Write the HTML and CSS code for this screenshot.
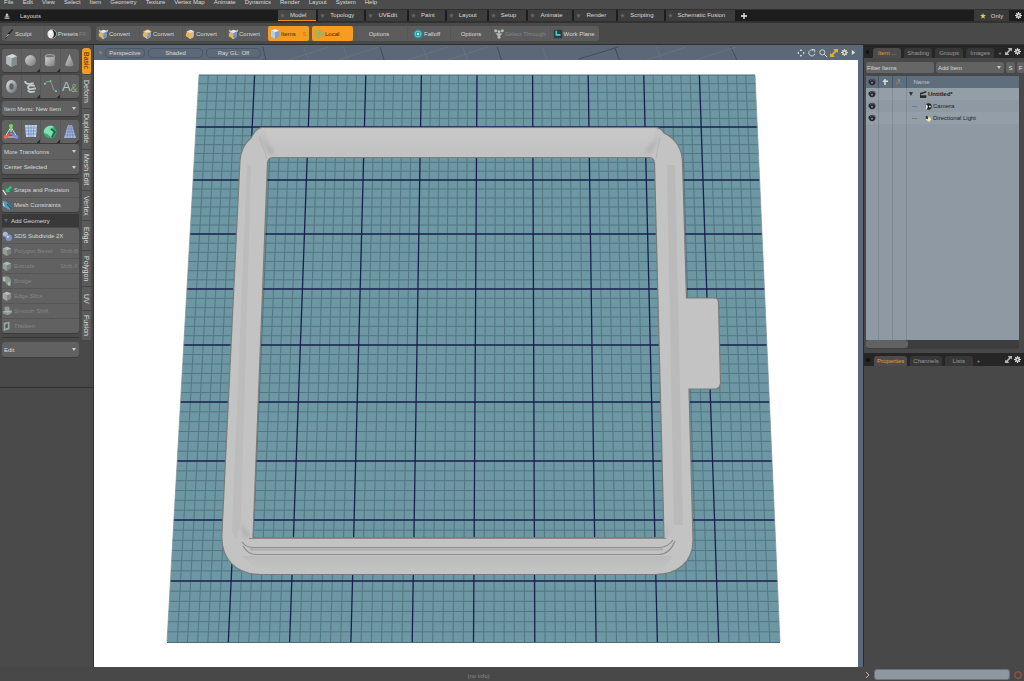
FILE: index.html
```
<!DOCTYPE html>
<html lang="en">
<head>
<meta charset="utf-8">
<title>Modeler</title>
<link rel="stylesheet" href="styles.css">
</head>
<body>
<svg class="defs" width="0" height="0" aria-hidden="true">
  <defs>
    <linearGradient id="metal" x1="0" y1="0" x2="1" y2="1"><stop offset="0" stop-color="#d2d5d7"/><stop offset="1" stop-color="#777b7e"/></linearGradient>
    <symbol id="gear" viewBox="0 0 12 12"><g stroke="#d6d6d6" stroke-width="2"><path d="M6 0v12M0 6h12M2 2l8 8M10 2l-8 8"/></g><circle cx="6" cy="6" r="4" fill="#d6d6d6"/><circle cx="6" cy="6" r="1.500" fill="#444"/></symbol>
    <symbol id="expand" viewBox="0 0 12 12"><path d="M6 0h6v6l-2-2-5 5 2 2-1 1H0V6l2 2 5-5-2-2z" fill="currentColor"/></symbol>
    <symbol id="convert" viewBox="0 0 12 12"><path d="M2 3l5-2 4 2-1 7-4 2-4-3z" fill="#a9c2dc"/><path d="M2 3l5-2 4 2-5 2z" fill="#dbe7f2"/><path d="M6 5l5-2-1 7-4 2z" fill="#6f93bd"/><path d="M1 5h3V3l3 4-3 4V9H1z" fill="#f3b04a"/><circle cx="2" cy="2" r="1.200" fill="#f5b750"/><circle cx="11" cy="2" r="1.200" fill="#f5b750"/><circle cx="6" cy="11" r="1.200" fill="#f5b750"/></symbol>
    <symbol id="convert-warm" viewBox="0 0 12 12"><path d="M2 3l5-2 4 2-1 7-4 2-4-3z" fill="#efb76a"/><path d="M2 3l5-2 4 2-5 2z" fill="#d4e2ee"/><path d="M6 5l5-2-1 7-4 2z" fill="#d9b893"/><path d="M1 5h3V3l3 4-3 4V9H1z" fill="#f3b04a"/></symbol>
    <symbol id="convert-edge" viewBox="0 0 12 12"><path d="M2 3l5-2 4 2-1 7-4 2-4-3z" fill="#b9cbdd"/><path d="M6 5l5-2-1 7-4 2z" fill="#7d9cc0"/><path d="M2 3l5-2 4 2-5 2z" fill="#dfe8f0" stroke="#f3b04a"/><path d="M1 5h3V3l3 4-3 4V9H1z" fill="#f3b04a"/></symbol>
    <symbol id="eye" viewBox="0 0 12 12"><path d="M1 4c2-4 9-4 10 0 1 4-2 7-5 7-3 0-4-2-4-3 0 0-2-1-1-4z" fill="#262a30"/><path d="M3 4c2-2 5-2 7 0" stroke="#8f99a2" fill="none" stroke-width=".8"/><circle cx="6" cy="7" r="1.300" fill="#9aa4ad"/></symbol>
    <symbol id="cube" viewBox="0 0 12 12"><path d="M1 2l6-2 4 2v8l-5 2-5-3z" fill="#868b8e"/><path d="M1 2l6-2 4 2-5 2z" fill="#d5d8d9"/><path d="M1 2l5 2v8l-5-3z" fill="#b3b8bb"/></symbol>
    <symbol id="cube-green" viewBox="0 0 12 12"><path d="M1 3l5-2 5 2v6l-5 3-5-3z" fill="#7f8d86"/><path d="M1 3l5-2 5 2-5 2z" fill="#c5d2ca"/><path d="M1 3l5 2v7L1 9z" fill="#a1afa7"/></symbol>
    <symbol id="star" viewBox="0 0 10 10"><path d="M5 0l1.300 3.500H10L7 5.800 8.100 9.500 5 7.300 1.900 9.500 3 5.800 0 3.500h3.700z" fill="currentColor"/></symbol>
  </defs>
</svg>
<div class="app">
  <nav class="menubar" aria-label="Main menu">
    <button>File</button><button>Edit</button><button>View</button><button>Select</button><button>Item</button><button>Geometry</button><button>Texture</button><button>Vertex Map</button><button>Animate</button><button>Dynamics</button><button>Render</button><button>Layout</button><button>System</button><button>Help</button>
  </nav>

  <header class="layouts">
    <button class="layouts-menu"><svg class="ic6" viewBox="0 0 8 10"><path d="M4 0l3 4H5v2h3v1H0V6h3V4H1zM0 8h8v1.500H0z" fill="#d0d0d0"/></svg>Layouts</button>
    <nav class="layout-tabs" aria-label="Layouts">
      <button class="ltab on"><svg class="star"><use href="#star"/></svg>Model</button>
      <button class="ltab"><svg class="star"><use href="#star"/></svg>Topology</button>
      <button class="ltab"><svg class="star"><use href="#star"/></svg>UVEdit</button>
      <button class="ltab"><svg class="star"><use href="#star"/></svg>Paint</button>
      <button class="ltab"><svg class="star"><use href="#star"/></svg>Layout</button>
      <button class="ltab"><svg class="star"><use href="#star"/></svg>Setup</button>
      <button class="ltab"><svg class="star"><use href="#star"/></svg>Animate</button>
      <button class="ltab"><svg class="star"><use href="#star"/></svg>Render</button>
      <button class="ltab"><svg class="star"><use href="#star"/></svg>Scripting</button>
      <button class="ltab"><svg class="star"><use href="#star"/></svg>Schematic Fusion</button>
      <button class="addtab" aria-label="Add layout"><svg class="ic6" viewBox="0 0 6 6"><path d="M3 0v6M0 3h6" stroke="#eee" stroke-width="1.300"/></svg></button>
    </nav>
    <button class="only"><svg class="star"><use href="#star"/></svg>Only</button>
    <button class="gearbtn" aria-label="Layout settings"><svg class="ic7"><use href="#gear"/></svg></button>
  </header>

  <div class="toolbar">
    <div class="tgroup mode">
      <button class="tb sculpt"><svg class="ic10" viewBox="0 0 12 12"><path d="M1 11l4-6 5-5 1 1-5 6-4 5z" fill="#1f1f1f"/><path d="M1 11l4-5 1 1z" fill="#d8d8d8"/></svg>Sculpt</button>
      <button class="tb presets"><svg class="ic10" viewBox="0 0 12 12"><circle cx="6" cy="6" r="5.500" fill="#e8e8e8"/><path d="M6 1a5 5 0 0 1 0 10c3-2 3-7 0-10z" fill="#2b2b2b"/><circle cx="4" cy="4" r="1.500" fill="#fff"/></svg>Presets<span class="key">F6</span></button>
    </div>
    <div class="tgroup">
      <button class="tb cell"><svg class="ic10"><use href="#convert"/></svg>Convert</button>
      <button class="tb cell"><svg class="ic10"><use href="#convert-edge"/></svg>Convert</button>
      <button class="tb cell"><svg class="ic10"><use href="#convert-warm"/></svg>Convert</button>
      <button class="tb cell"><svg class="ic10"><use href="#convert"/></svg>Convert</button>
      <button class="tb cell hot"><svg class="ic10" viewBox="0 0 12 12"><path d="M1 2l5-2 5 2v7l-5 3-5-3z" fill="#7f9fd0"/><path d="M1 2l5-2 5 2-5 2z" fill="#e8eef6"/><path d="M1 2l5 2v8L1 9z" fill="#bccbe2"/></svg>Items<span class="key">5</span></button>
      <button class="tb cell hot"><svg class="ic10" viewBox="0 0 12 12"><g fill="none" stroke="#7db78c"><circle cx="6" cy="6" r="4.500"/><circle cx="6" cy="6" r="2"/><path d="M6 0v12M0 6h12"/></g></svg>Local</button>
      <button class="tb opt">Options</button>
      <button class="tb cell fall"><svg class="ic10" viewBox="0 0 12 12"><circle cx="6" cy="6" r="5.500" fill="#2c8d93"/><circle cx="6" cy="6" r="3.500" fill="none" stroke="#6fe0e2"/><circle cx="6" cy="6" r="1.500" fill="#aef5f4"/></svg>Falloff</button>
      <button class="tb opt2">Options</button>
      <button class="tb dim"><svg class="ic10" viewBox="0 0 12 12"><g fill="#b4b9b9"><circle cx="2" cy="2" r="1.800"/><circle cx="6" cy="3" r="1.800"/><circle cx="10" cy="2" r="1.800"/><path d="M2 5h8L7 9H5z"/><circle cx="6" cy="10" r="1.800"/></g></svg>Select Through</button>
      <button class="tb"><svg class="ic10" viewBox="0 0 12 12"><path d="M1 1h10v10H1z" fill="#2f3a3c"/><path d="M4 2v5h5" fill="none" stroke="#45cfd0" stroke-width="2"/></svg>Work Plane</button>
    </div>
  </div>

  <main class="work">
    <aside class="left">
      <div class="tools">
        <div class="box icons">
          <button class="it" aria-label="Cube"><svg class="ic13"><use href="#cube"/></svg></button>
          <button class="it more" aria-label="Sphere"><svg class="ic13" viewBox="0 0 12 12"><circle cx="6" cy="6" r="5" fill="url(#metal)"/></svg></button>
          <button class="it more" aria-label="Cylinder"><svg class="ic13" viewBox="0 0 12 12"><path d="M1 2v8c1 2 8 2 9 0V2z" fill="url(#metal)"/><ellipse cx="5.500" cy="2" rx="4.500" ry="1.500" fill="#6d7173" stroke="#c5c8ca" stroke-width=".6"/></svg></button>
          <button class="it" aria-label="Cone"><svg class="ic13" viewBox="0 0 12 12"><path d="M6 0l4 10c-1 2-7 2-8 0z" fill="url(#metal)"/></svg></button>
        </div>
        <div class="box icons">
          <button class="it" aria-label="Torus"><svg class="ic13" viewBox="0 0 12 12"><ellipse cx="6" cy="6" rx="3.500" ry="4.500" fill="none" stroke="url(#metal)" stroke-width="3"/></svg></button>
          <button class="it more" aria-label="Sweep"><svg class="ic13" viewBox="0 0 12 12"><path d="M1 1c0 3 4 3 8 2M10 5.500c-5-1-7 0-6 2s4 1 7 0M4 9c0 3 4 2 6 1.500" fill="none" stroke="#c1c6c8" stroke-width="1.700"/></svg></button>
          <button class="it more" aria-label="Curve"><svg class="ic13" viewBox="0 0 14 14"><path d="M0 5c4-6 8-3 9 1s1 5 4 6" fill="none" stroke="#8fa394"/><g fill="#7fd39b"><circle cx="1" cy="4" r="1"/><circle cx="7" cy="1" r="1"/><circle cx="13" cy="12" r="1"/></g></svg></button>
          <button class="it glyph" aria-label="Text">A<span class="amp">&amp;</span></button>
        </div>
        <button class="box row pop solo">Item Menu: New Item<i class="tri"></i></button>
        <div class="box icons xf">
          <button class="it" aria-label="Transform"><svg class="ic16" viewBox="0 0 16 16"><path d="M8 3l6 10H2z" fill="none" stroke="#ddd"/><path d="M8 2v6" stroke="#5fe06a" stroke-width="2"/><path d="M8 9l-5 4" stroke="#e05b52" stroke-width="2"/><path d="M8 9l5 4" stroke="#6f8ff0" stroke-width="2"/><circle cx="8" cy="2" r="2" fill="#74e05e"/><circle cx="2.500" cy="13" r="2" fill="#e5655c"/><circle cx="13.500" cy="13" r="2" fill="#738eea"/></svg></button>
          <button class="it more" aria-label="Move"><svg class="ic16" viewBox="0 0 16 16"><path d="M2 1h12l-1 12H3z" fill="#c2d4f0"/><path d="M2 4h12M2 7h11M3 10h10M5 1l1 12M8 1v12M11 1l-1 12" stroke="#6684b7" stroke-width=".7"/></svg></button>
          <button class="it more" aria-label="Rotate"><svg class="ic16" viewBox="0 0 16 16"><circle cx="8" cy="8" r="6.500" fill="#35a974"/><path d="M2 6c3-5 8-5 10-3L8 5l3 3-2 5-4-3-3-1z" fill="#86dcb1"/><path d="M9 5l4 3-3 5" fill="none" stroke="#166842" stroke-width="1.500"/></svg></button>
          <button class="it more" aria-label="Scale"><svg class="ic16" viewBox="0 0 16 16"><path d="M6 1h4l4 13H2z" fill="#a8b9dc"/><path d="M5 5h6M4 8h8M3 11h10M8 1v13M7 1L5 14M9 1l2 13" stroke="#6d83b4" stroke-width=".7"/></svg></button>
        </div>
        <div class="box col">
          <button class="row pop">More Transforms<i class="tri"></i></button>
          <button class="row pop">Center Selected<i class="tri"></i></button>
        </div>
        <hr class="rule">
        <div class="box col">
          <button class="row"><svg class="ic10" viewBox="0 0 12 12"><path d="M1 6l4 6" stroke="#e7e7e7" stroke-width="1.500"/><path d="M4 9l1-6 1 2 4-4 2 2-4 4 2 1z" fill="#2cc77b"/></svg>Snaps and Precision</button>
          <button class="row"><svg class="ic10" viewBox="0 0 12 12"><path d="M1 1l4 1 6 6-2 4-5-3z" fill="#4f9fcb"/><path d="M1 1l3 8-3-2z" fill="#b6d9ee"/><path d="M6 5l5 5" stroke="#1f4f74" stroke-width="1.500"/></svg>Mesh Constraints</button>
        </div>
        <h2 class="sect"><i class="tri open"></i>Add Geometry</h2>
        <div class="box col">
          <button class="row"><svg class="ic10" viewBox="0 0 12 12"><circle cx="4" cy="4" r="3" fill="#a9bbd7"/><circle cx="8" cy="8" r="3.800" fill="#8198c6"/><circle cx="7" cy="7" r="1.200" fill="#dce5f4"/></svg>SDS Subdivide 2X</button>
          <button class="row" disabled><svg class="ic10"><use href="#cube-green"/></svg>Polygon Bevel<span class="key">Shift-B</span></button>
          <button class="row" disabled><svg class="ic10"><use href="#cube-green"/></svg>Extrude<span class="key">Shift-X</span></button>
          <button class="row" disabled><svg class="ic10" viewBox="0 0 12 12"><path d="M1 1l4-1c5 1 6 4 6 8l-3 3-3-1c0-3-1-4-4-4z" fill="#8ba797"/><path d="M1 1v5l3 1V2zM7 7v4l3 1V8z" fill="#c9d2cd"/></svg>Bridge</button>
          <button class="row" disabled><svg class="ic10" viewBox="0 0 12 12"><path d="M1 3l5-2 5 2v6l-5 3-5-3z" fill="#8f9090"/><path d="M1 3l5-2 5 2-5 2z" fill="#d8cfd4"/><path d="M1 3l5 2v7L1 9z" fill="#b9b4bb"/></svg>Edge Slice</button>
          <button class="row" disabled><svg class="ic10" viewBox="0 0 12 12"><path d="M3 1h6v4h3v3l-5 3-6-2V6h2z" fill="#9fa6a2"/><path d="M1 6h11l-5 2z" fill="#c8cdca"/></svg>Smooth Shift</button>
          <button class="row" disabled><svg class="ic10" viewBox="0 0 12 12"><path d="M2 2l7-1v9l-7 2z" fill="#a9b9b0"/><path d="M4 4l3-1v5L4 9z" fill="#4f5c55"/></svg>Thicken</button>
        </div>
        <hr class="rule">
        <button class="box row pop solo">Edit<i class="tri"></i></button>
      </div>
      <nav class="vtabs" aria-label="Tool categories">
        <button class="vt on">Basic</button><button class="vt t34">Deform</button><button class="vt t40">Duplicate</button><button class="vt t40">Mesh Edit</button><button class="vt">Vertex</button><button class="vt">Edge</button><button class="vt t36">Polygon</button><button class="vt t22">UV</button><button class="vt">Fusion</button>
      </nav>
    </aside>

    <section class="view" aria-label="Viewport">
      <div class="viewhead">
        <svg class="headlines" viewBox="94 45 769 15" preserveAspectRatio="none" aria-hidden="true"><path d="M264 47l3 13M382 47l4 13M500 47l4 13M582 59l40-12M618 47l5 13M735 47l6 13" stroke="#414c5a" fill="none"/><path d="M290 60l40-13M340 60l40-13M410 60l40-13M450 60l40-13M650 60l40-13M700 60l40-13M305 47l5 13M345 47l5 13M425 47l5 13M465 47l5 13M545 47l5 13M660 47l5 13" stroke="#657282" fill="none"/></svg>
        <i class="vdot"></i>
        <button class="pill p1">Perspective</button><button class="pill p2">Shaded</button><button class="pill p2">Ray GL: Off</button>
        <div class="vicons">
          <svg class="ic8" viewBox="0 0 12 12"><path d="M6 0l2 3H4zM6 12l2-3H4zM0 6l3-2v4zM12 6L9 4v4z" fill="#ddd"/></svg>
          <svg class="ic8" viewBox="0 0 12 12"><path d="M8 2a4.500 4.500 0 1 0 2 5M6 1h4v4" fill="none" stroke="#ddd" stroke-width="1.400"/></svg>
          <svg class="ic8" viewBox="0 0 12 12"><circle cx="5" cy="5" r="3.800" fill="none" stroke="#ddd" stroke-width="1.300"/><path d="M8 8l4 4" stroke="#ddd" stroke-width="1.500"/></svg>
          <svg class="ic8 gold"><use href="#expand"/></svg>
          <svg class="ic7"><use href="#gear"/></svg>
          <svg class="ic5" viewBox="0 0 6 6"><path d="M1 0l4 3-4 3z" fill="#e4e4e4"/></svg>
        </div>
      </div>
      <svg class="scene" viewBox="94 60 764 607" role="img" aria-label="Frame model on a grid">
        <defs>
          <linearGradient id="topface" x1="0" x2="0" y1="128" y2="158" gradientUnits="userSpaceOnUse"><stop offset="0" stop-color="#c9c9c9"/><stop offset="1" stop-color="#c0c0c0"/></linearGradient>
          <linearGradient id="botface" x1="0" x2="0" y1="553" y2="575" gradientUnits="userSpaceOnUse"><stop offset="0" stop-color="#b7b7b7"/><stop offset="1" stop-color="#c5c5c5"/></linearGradient>
          <filter id="soft" x="-50%" y="-50%" width="200%" height="200%"><feGaussianBlur stdDeviation="2"/></filter>
        </defs>
        <path d="M199 75H755L780 642H167Z" fill="#6c97a3"/>
        <path id="minor" class="minor"/>
        <path id="major" class="major"/>
        <path d="M199 75H755M167 642.500H780" stroke="#4d6b7c" fill="none"/>
        <path d="M199 75L167 642M755 75L780 642" stroke="#7d909b" fill="none" stroke-width=".7"/>
        <path fill="#c3c3c3" fill-rule="evenodd" stroke="#777b7b" stroke-width="1.200" d="M262 127.500H656Q661 128 664 133C676 139 682 148 682.500 162L686.500 298H714Q718 298 718.500 302L720.500 383Q720 389 715 389H689L693 540C693 562 678 574.500 655 574.500H261C236 574.500 220 559 222 532L240 160C241 149 245 143 251 138Q256 128 262 127.500ZM273 157.500Q268 157.500 267.500 163L253 537.500H664L654.500 163Q654 157.500 649 157.500Z"/>
        <path d="M265 129H655L650 156H275Z" fill="url(#topface)"/>
        <path d="M247 165L232 530L236 540L241 520L251 165Z" fill="#bcbcbc"/>
        <path d="M667 165L674 525L683 525L675 165Z" fill="#bababa"/>
        <path d="M242 556H673L660 573H261Z" fill="url(#botface)" opacity=".8"/>
        <g fill="#979797" filter="url(#soft)" opacity=".65"><path d="M259 134l16 20h-5z"/><path d="M659 136l-9 17-4-2z"/><path d="M240 522l10 14-5 1z"/><path d="M669 522l-4 14 2 1z"/></g>
        <g fill="none">
          <path d="M242 542Q246 547.500 253 547.500H660Q668 547 673 540M243 546Q248 554.500 256 554.500H659Q670 554 675 541" stroke="#8d8d8d" stroke-width="1.200"/>
          <path d="M250 549.500H663" stroke="#acacac" stroke-width="2"/>
          <path d="M259 136l8 23M660 137l-4 22" stroke="#b4b4b4"/>
          <path d="M249 538.500H666" stroke="#8b8b8b"/>
        </g>
      </svg>
    </section>

    <aside class="right">
      <section class="items">
        <div class="ptabs"><i class="pdot"></i><button class="pt on">Item ...</button><button class="pt">Shading</button><button class="pt">Groups</button><button class="pt">Images</button><button class="pt plus">+</button><span class="pticons"><svg class="ic7"><use href="#expand"/></svg><svg class="ic7"><use href="#gear"/></svg></span></div>
        <div class="filter">
          <input class="fin" type="text" placeholder="Filter Items" aria-label="Filter Items">
          <button class="fbtn add">Add Item<i class="tri"></i></button>
          <button class="fbtn">S</button><button class="fbtn last">F</button>
        </div>
        <div class="treewrap">
          <div class="treebox">
            <table class="tree">
              <thead><tr><th class="ec"><svg class="ic8"><use href="#eye"/></svg></th><th class="c14"><svg class="ic6" viewBox="0 0 8 8"><path d="M4 0v8M1 3h7" stroke="#ddd" stroke-width="2"/></svg></th><th class="c14"><svg class="ic6" viewBox="0 0 8 8"><path d="M4 0v5" stroke="#52bd67" stroke-width="2"/><path d="M4 4L0 7" stroke="#d9534f" stroke-width="2"/><path d="M4 4l4 3" stroke="#5672d1" stroke-width="2"/></svg></th><th class="nm">Name</th></tr></thead>
              <tbody>
                <tr><td class="ec"><svg class="ic8"><use href="#eye"/></svg></td><td></td><td></td><td><span class="node"><i class="tri dark"></i><svg class="ic7" viewBox="0 0 10 10"><path d="M0 3l9-3v2L1 5v1h8v4H0z" fill="#2a2a2a"/></svg><b>Untitled*</b></span></td></tr>
                <tr><td class="ec"><svg class="ic8"><use href="#eye"/></svg></td><td></td><td></td><td><span class="node kid"><svg class="ic7" viewBox="0 0 10 10"><circle cx="5" cy="5" r="4.500" fill="#222"/><path d="M1 2c4 0 4 6 0 7z" fill="#e9e9e9"/><circle cx="7" cy="5" r="1.500" fill="#ccc"/></svg>Camera</span></td></tr>
                <tr><td class="ec"><svg class="ic8"><use href="#eye"/></svg></td><td></td><td></td><td><span class="node kid"><svg class="ic7" viewBox="0 0 10 10"><path d="M1 1l5 1 3 4-3 4-4-3z" fill="#f2eca5"/><path d="M1 1l4 1-1 4-3-1z" fill="#333"/></svg>Directional Light</span></td></tr>
              </tbody>
            </table>
          </div>
          <div class="hscroll"><i class="thumb"></i></div>
        </div>
      </section>
      <section class="props">
        <div class="ptabs"><i class="pdot"></i><button class="pt on">Properties</button><button class="pt">Channels</button><button class="pt">Lists</button><button class="pt plus">+</button><span class="pticons"><svg class="ic7"><use href="#expand"/></svg><svg class="ic7"><use href="#gear"/></svg></span></div>
      </section>
    </aside>
  </main>

  <footer class="status">
    <span class="info">(no info)</span>
    <div class="cmd"><svg class="ic6" viewBox="0 0 6 6"><path d="M2 0l3 3-3 3" fill="none" stroke="#bbb"/></svg><input type="text" aria-label="Command"><svg class="ic8" viewBox="0 0 10 10"><circle cx="5" cy="5" r="4" fill="none" stroke="#b0533c" stroke-width="1.300"/></svg></div>
  </footer>
</div>
<script src="grid.js"></script>
</body>
</html>
```

FILE: grid.js
```
// Ground grid seen in perspective: ten major cells each way, six minor steps per cell.
const rows = [75, 127, 180, 234, 289, 345, 402, 461, 520, 581, 642];
const top0 = 75, bottom0 = 642;
const edge = (y) => {
  const t = (y - top0) / (bottom0 - top0);
  return [199 - 32 * t, 755 + 25 * t];
};
let major = "", minor = "";
for (let i = 1; i < 60; i++) {
  const f = i / 60;
  const seg = `M${199 + 556 * f} ${top0}L${167 + 613 * f} ${bottom0}`;
  if (i % 6 === 0) major += seg; else minor += seg;
}
for (let r = 0; r < 10; r++) {
  for (let k = 0; k < 6; k++) {
    const y = rows[r] + (rows[r + 1] - rows[r]) * k / 6;
    if (r === 0 && k === 0) continue;
    const [a, b] = edge(y);
    const seg = `M${a} ${y}H${b}`;
    if (k === 0) major += seg; else minor += seg;
  }
}
document.getElementById("minor").setAttribute("d", minor);
document.getElementById("major").setAttribute("d", major);
```

FILE: styles.css
```
* { box-sizing: border-box; }
html, body { height: 100%; margin: 0; }
body { background: #484848; color: #dadada; font: 6px/10px "Liberation Sans", Arial, sans-serif; overflow: hidden; }
button, input { font: inherit; color: inherit; border: 0; padding: 0; margin: 0; background: none; white-space: nowrap; }
svg { display: block; flex: none; }
.defs { position: absolute; }
.ic5 { width: 5px; height: 5px; }
.ic6 { width: 6px; height: 6px; }
.ic7 { width: 7px; height: 7px; }
.ic8 { width: 8px; height: 8px; }
.ic10 { width: 10px; height: 10px; }
.ic13 { width: 13px; height: 13px; }
.ic16 { width: 16px; height: 16px; }
.star { width: 5px; height: 5px; color: #666; }
.tri { width: 0; height: 0; margin-left: auto; border: 2px solid transparent; border-top: 3px solid #ccc; border-bottom: 0; }

.app { height: 100vh; display: grid; grid-template-rows: 9px 13px 23px minmax(0, 1fr) 14px; }

.menubar { display: flex; align-items: flex-end; gap: 9px; padding: 0 4px; overflow: hidden; background: #4c4c4c; }
.menubar button { height: 14px; line-height: 10px; }

.layouts { display: flex; align-items: stretch; background: #1d1d1d; border-top: 1px solid #303030; border-bottom: 1px solid #303030; }
.layouts-menu { width: 278px; display: flex; align-items: center; gap: 10px; padding-left: 4px; }
.layout-tabs { display: flex; gap: 2px; }
.ltab { display: flex; align-items: center; gap: 5px; padding: 0 10px 0 2px; background: #3d3d3d; border-bottom: 1px solid #3d3d3d; }
.ltab.on { border-bottom-color: #e8921c; background: #474747; }
.addtab { padding: 0 4px; }
.only { margin-left: auto; width: 35px; display: flex; align-items: center; justify-content: center; gap: 5px; background: #3a3a3a; }
.only .star { width: 6px; height: 6px; color: #d8cf52; }
.gearbtn { padding: 0 2px 0 6px; }

.toolbar { display: flex; align-items: center; gap: 5px; padding: 0 2px; border-top: 1px solid #333; border-bottom: 1px solid #2f2f2f; background: #494949; }
.tgroup { display: flex; height: 15px; background: #5c5c5c; border-radius: 3px; overflow: hidden; }
.mode { width: 89px; }
.sculpt { width: 43px; }
.presets { flex: 1; }
.tb { display: flex; align-items: center; gap: 1px; padding: 0 4px 0 2px; }
.tb + .tb { border-left: 1px solid #555; }
.cell { width: 43px; padding-right: 2px; }
.tb.hot { background: #f59d20; color: #3c2608; width: 41px; border: 0; border-radius: 2px; margin-right: 3px; }
.key { margin-left: auto; color: #838383; padding-right: 1px; }
.hot .key { color: #b67a25; }
.opt { width: 51px; justify-content: center; padding: 0 6px 0 0; }
.fall { padding-left: 5px; }
.opt2 { width: 41px; justify-content: center; padding: 0; }
.dim { color: #858585; }

.work { display: grid; grid-template-columns: 94px minmax(0, 1fr) 161px; min-height: 0; }

.left { display: flex; gap: 3px; padding: 3px 2px 0; border-right: 1px solid #333; background: linear-gradient(#494949 342px, #303030 342px, #303030 343px, #4a4a4a 343px); }
.tools { width: 77px; display: flex; flex-direction: column; }
.box { background: #616161; border-radius: 3px; box-shadow: 0 1px 0 #3b3b3b; overflow: hidden; }
.icons { display: flex; height: 23px; margin: 1px 0 2px; }
.xf { margin-bottom: 1px; }
.it { flex: 1; display: grid; place-items: center; }
.it + .it { border-left: 1px solid #585858; }
.more { background: linear-gradient(135deg, transparent 92%, #2d2d2d 92%); }
.glyph { font-size: 13px; color: #b5c0ba; display: flex; align-items: center; justify-content: center; }
.amp { color: #86b597; font-size: 10px; padding-top: 4px; }
.row { display: flex; align-items: center; gap: 2px; height: 15px; width: 100%; text-align: left; }
.row + .row { border-top: 1px solid #565656; }
.row.pop { padding: 0 3px 0 2px; }
.solo { margin: 1px 0 3px; flex: none; }
.col { flex: none; }
.row:disabled { color: #868686; }
.row:disabled svg { opacity: .8; }
.rule { width: 100%; height: 1px; border: 0; margin: 4px 0 3px; background: #343434; }
.sect { display: flex; align-items: center; gap: 3px; height: 13px; margin: 2px 0 1px; padding-left: 2px; background: #393939; font: inherit; }
.open { margin: 0; border-width: 3px 2px 0; border-top-color: #666; }
.vtabs { width: 9px; display: flex; flex-direction: column; align-self: flex-start; background: #5b5b5b; border-radius: 3px; overflow: hidden; }
.vt { writing-mode: vertical-rl; width: 9px; height: 30px; font-size: 7px; line-height: 9px; text-align: center; border-bottom: 1px solid #454545; }
.vt.on { height: 27px; background: #f59d20; color: #3c2608; border-radius: 3px; }
.t34 { height: 34px; }
.t40 { height: 41px; }
.t36 { height: 36px; }
.t22 { height: 24px; }

.view { display: grid; grid-template-rows: 15px minmax(0, 1fr); background: #5b6878; padding-right: 5px; min-width: 0; }
.viewhead { position: relative; display: flex; align-items: center; gap: 3px; padding: 0 2px 0 5px; }
.headlines { position: absolute; inset: 0; width: 100%; height: 100%; }
.vdot { width: 3px; height: 3px; border-radius: 50%; background: #b07a38; }
.pill { position: relative; height: 10px; line-height: 8px; border: 1px solid #4d5866; border-radius: 4px; background: #5d6978; }
.p1 { width: 40px; }
.p2 { width: 55px; }
.vicons { position: relative; margin-left: auto; display: flex; align-items: center; gap: 3px; }
.gold { color: #dfb021; }
.scene { width: 100%; height: 100%; background: #fff; }
.minor { fill: none; stroke: #537682; stroke-width: 1; }
.major { fill: none; stroke: #18204d; stroke-width: 1.3; }

.right { display: grid; grid-template-columns: minmax(0, 1fr); grid-template-rows: 308px minmax(0, 1fr); background: #484848; border-left: 1px solid #2c2c2c; min-width: 0; }
.items { display: flex; flex-direction: column; min-height: 0; }
.ptabs { display: flex; align-items: flex-end; gap: 3px; height: 13px; padding: 0 3px 0 2px; background: #262626; }
.pdot { width: 4px; height: 4px; margin: 0 1px 4px 0; border-radius: 50%; background: #111; }
.pt { height: 10px; min-width: 28px; padding: 0 3px; background: #373737; border-radius: 3px 3px 0 0; color: #9a9a9a; }
.pt.on { background: #4c4c4c; color: #f09a25; }
.pt.plus { background: none; min-width: 0; padding: 0 1px; }
.pticons { margin-left: auto; display: flex; gap: 2px; padding-bottom: 3px; color: #b5b5b5; }
.filter { display: flex; gap: 2px; padding: 4px 0 3px 2px; }
.fin { flex: 1; min-width: 0; height: 11px; padding: 0 1px; background: #666; border-radius: 2px; }
.fin::placeholder { color: #dadada; opacity: 1; }
.fbtn { height: 11px; width: 9px; background: #626262; border-radius: 2px; }
.fbtn.last { width: 7px; }
.fbtn.add { width: 68px; display: flex; align-items: center; padding: 0 3px 0 2px; }
.treewrap { flex: 1; display: flex; flex-direction: column; margin: 0 5px 4px 2px; min-height: 0; }
.treebox { flex: 1; background: linear-gradient(90deg, transparent 12px, #7d8993 12px, #7d8993 13px, transparent 13px, transparent 26px, #7d8993 26px, #7d8993 27px, transparent 27px, transparent 40px, #7d8993 40px, #7d8993 41px, transparent 41px), #8f99a3; }
.tree { width: 100%; border-collapse: collapse; table-layout: fixed; color: #1f2327; }
.tree th { height: 12px; padding: 0; background: #5f6e7d; color: #bcc6cf; font-weight: normal; text-align: left; border-right: 1px solid #4c5966; }
.tree td { height: 12px; padding: 0; }
.tree tbody tr:nth-child(odd) { background: rgba(255, 255, 255, .05); }
.tree .ec { width: 12px; }
.ec svg { margin-left: 2px; }
.tree .c14 { width: 14px; }
.c14 svg { margin: 0 auto; }
.tree .nm { padding-left: 7px; border: 0; }
.node { display: flex; align-items: center; gap: 1px; padding-left: 3px; }
.tri.dark { margin: 0 6px 0 0; border-width: 4px 2px 0; border-top-color: #30353a; }
.kid { padding-left: 6px; }
.kid::before { content: ""; width: 5px; height: 1px; margin-right: 7px; background: #6f7a84; }
.hscroll { height: 9px; background: #3d3d3d; border-radius: 3px; }
.thumb { display: block; width: 42px; height: 8px; background: #626262; border-radius: 3px; }

.status { display: grid; grid-template-columns: minmax(0, 1fr) 161px; align-items: center; background: #484848; }
.info { text-align: center; color: #8d8d8d; padding: 5px 0 0 94px; line-height: 9px; }
.cmd { display: flex; align-items: center; gap: 4px; padding: 1px 2px 0 1px; }
.cmd input { flex: 1; min-width: 0; height: 11px; background: #8e98a1; border-radius: 3px; border: 1px solid #6a7178; }
```
